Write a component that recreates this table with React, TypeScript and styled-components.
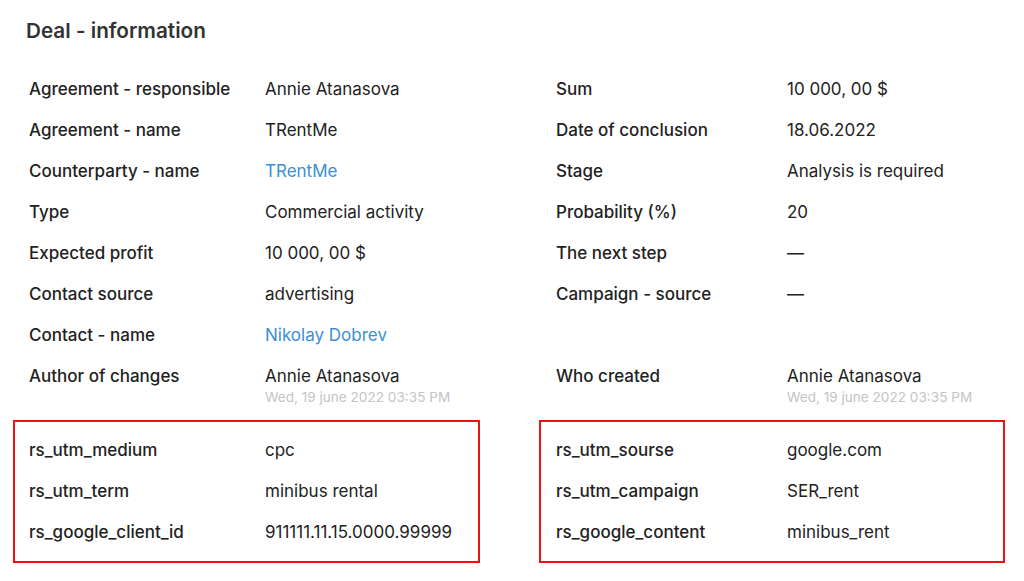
import { createGlobalStyle } from "styled-components";
import styled from "styled-components";

const GlobalStyle = createGlobalStyle`
  body {
    margin: 0;
    background: #ffffff;
    font-family: Inter, "Noto Sans", sans-serif;
    color: #222222;
  }
`;

const Page = styled.div`
  padding: 19px 0 0 29px;
`;

const Title = styled.h2`
  margin: 0 0 26px -3px;
  font-size: 20.7px;
  line-height: 24px;
  font-weight: 600;
  color: #333333;
`;

const Columns = styled.div`
  display: grid;
  grid-template-columns: 527px 1fr;
`;

const Column = styled.div<{ $labelWidth: number }>`
  display: flex;
  flex-direction: column;
  --label-width: ${({ $labelWidth }) => $labelWidth}px;
`;

const Field = styled.div`
  display: grid;
  grid-template-columns: var(--label-width, 236px) 1fr;
  padding: 10px 0;
  min-height: 21px;
  font-size: 17px;
  line-height: 21px;
`;

const Label = styled.div`
  font-weight: 500;
  color: #222222;
`;

const Value = styled.div<{ $link?: boolean }>`
  color: ${({ $link }) => ($link ? "#3b8fd4" : "#222222")};
  cursor: ${({ $link }) => ($link ? "pointer" : "default")};
`;

const Stamp = styled.div`
  font-size: 13.6px;
  line-height: 20px;
  color: #c4c4c4;
`;

const BoxRow = styled.div`
  display: grid;
  grid-template-columns: 527px 1fr;
  margin-top: 3px;
`;

const Box = styled.div<{ $shift: number; $width: number; $labelWidth: number }>`
  box-sizing: border-box;
  width: ${({ $width }) => $width}px;
  margin-left: -${({ $shift }) => $shift}px;
  padding: 8px 0 8px ${({ $shift }) => $shift - 2}px;
  border: 2px solid #f01010;
  --label-width: ${({ $labelWidth }) => $labelWidth}px;
`;

type Item = { label: string; value?: string; link?: boolean; stamp?: string };

const left: Item[] = [
  { label: "Agreement - responsible", value: "Annie Atanasova" },
  { label: "Agreement - name", value: "TRentMe" },
  { label: "Counterparty - name", value: "TRentMe", link: true },
  { label: "Type", value: "Commercial activity" },
  { label: "Expected profit", value: "10 000, 00 $" },
  { label: "Contact source", value: "advertising" },
  { label: "Contact - name", value: "Nikolay Dobrev", link: true },
  { label: "Author of changes", value: "Annie Atanasova", stamp: "Wed, 19 june 2022 03:35 PM" },
];

const right: Item[] = [
  { label: "Sum", value: "10 000, 00 $" },
  { label: "Date of conclusion", value: "18.06.2022" },
  { label: "Stage", value: "Analysis is required" },
  { label: "Probability (%)", value: "20" },
  { label: "The next step", value: "—" },
  { label: "Campaign - source", value: "—" },
  { label: "" },
  { label: "Who created", value: "Annie Atanasova", stamp: "Wed, 19 june 2022 03:35 PM" },
];

const utmLeft: Item[] = [
  { label: "rs_utm_medium", value: "cpc" },
  { label: "rs_utm_term", value: "minibus rental" },
  { label: "rs_google_client_id", value: "911111.11.15.0000.99999" },
];

const utmRight: Item[] = [
  { label: "rs_utm_sourse", value: "google.com" },
  { label: "rs_utm_campaign", value: "SER_rent" },
  { label: "rs_google_content", value: "minibus_rent" },
];

const Fields = ({ items }: { items: Item[] }) => (
  <>
    {items.map((item, i) => (
      <Field key={i}>
        <Label>{item.label}</Label>
        <div>
          <Value $link={item.link}>{item.value}</Value>
          {item.stamp && <Stamp>{item.stamp}</Stamp>}
        </div>
      </Field>
    ))}
  </>
);

export default function App() {
  return (
    <Page>
      <GlobalStyle />
      <Title>Deal - information</Title>
      <Columns>
        <Column $labelWidth={236}>
          <Fields items={left} />
        </Column>
        <Column $labelWidth={231}>
          <Fields items={right} />
        </Column>
      </Columns>
      <BoxRow>
        <Box $shift={16} $width={467} $labelWidth={236}>
          <Fields items={utmLeft} />
        </Box>
        <Box $shift={17} $width={466} $labelWidth={231}>
          <Fields items={utmRight} />
        </Box>
      </BoxRow>
    </Page>
  );
}
